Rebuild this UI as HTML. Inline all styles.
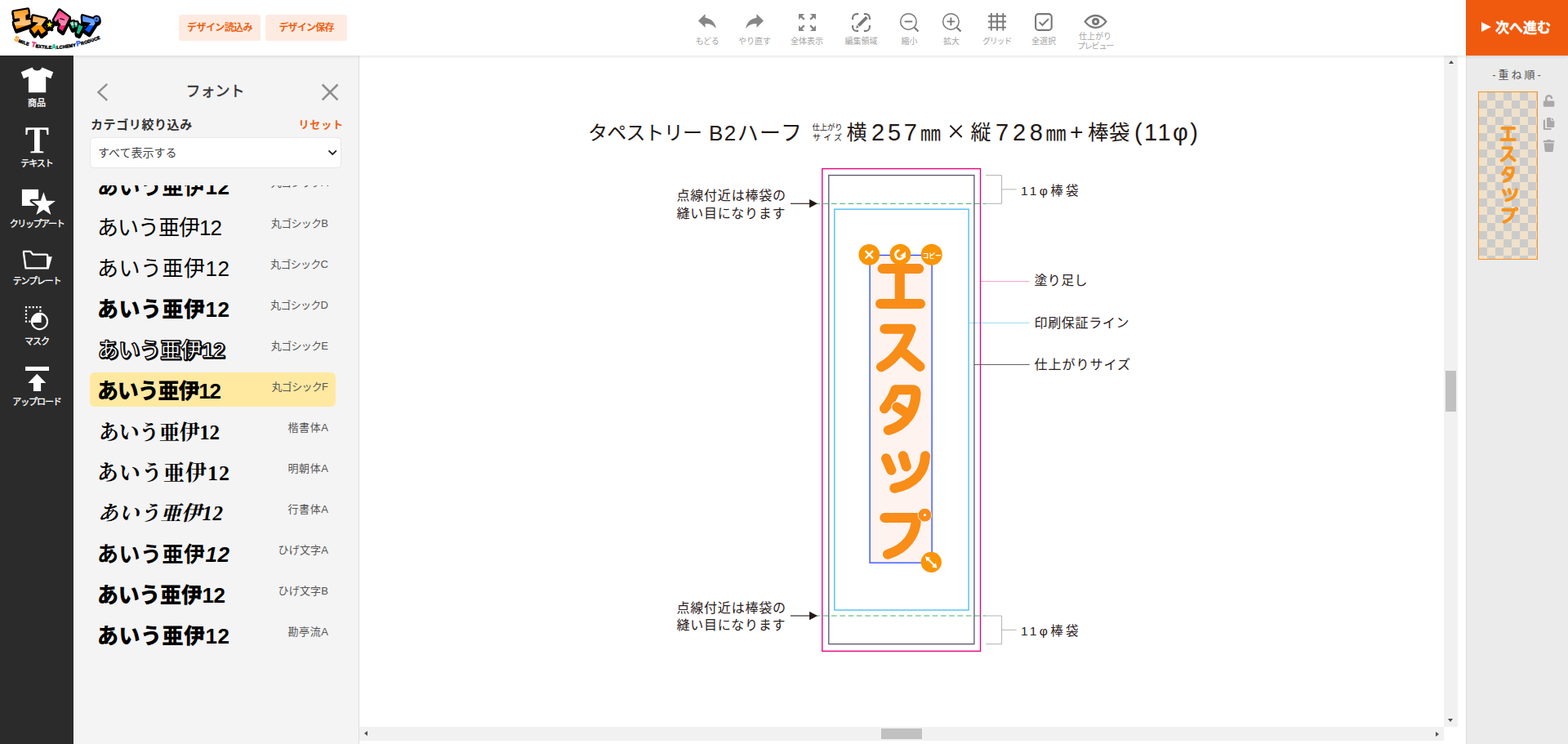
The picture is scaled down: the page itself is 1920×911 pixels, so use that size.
<!DOCTYPE html>
<html lang="ja">
<head>
<meta charset="utf-8">
<title>オリジナルデザイン作成 - フォント選択</title>
<style>
*{box-sizing:border-box;margin:0;padding:0}
html,body{width:1920px;height:911px;overflow:hidden;background:#fff}
body{position:relative;font-family:"Liberation Sans","Noto Sans CJK JP",sans-serif;color:#333;font-size:12px;line-height:1}
svg{display:block;overflow:visible}
.a{position:absolute}
/* header */
#header{position:absolute;left:0;top:0;width:1920px;height:68px;background:#fff;box-shadow:0 1px 4px rgba(0,0,0,.12);z-index:5}
#logo{position:absolute;left:0;top:0}
.hbtn{position:absolute;top:18px;width:100px;height:32px;border-radius:3px;background:#fdebe2;color:#f0600f;font-weight:bold;font-size:12px;line-height:32px;text-align:center;white-space:nowrap}
.tool{position:absolute;top:0;width:70px;height:68px;text-align:center}
.tool svg{position:absolute;left:0;top:0}
.tool span{position:absolute;left:-15px;right:-15px;top:45px;font-size:10px;line-height:11px;color:#a4a4a4;white-space:nowrap}
.tool span.two{top:39px;line-height:12px}
#next{position:absolute;left:1795px;top:0;width:125px;height:68px;background:#f05a0f;color:#fff;font-weight:bold;font-size:17px;z-index:6;-webkit-text-stroke:.4px #fff}
#next span{position:absolute;left:36px;top:25px;line-height:19px;white-space:nowrap}
#next i{position:absolute;left:19px;top:27px;width:0;height:0;border-left:12px solid #fff;border-top:6.5px solid transparent;border-bottom:6.5px solid transparent}
/* sidebar */
#side{position:absolute;left:0;top:68px;width:90px;height:843px;background:#2b2b2b}
.sitem{position:absolute;left:0;width:90px;text-align:center;color:#fff;font-size:11px;line-height:12px;white-space:nowrap;-webkit-text-stroke:.3px #fff}
/* font panel */
#panel{position:absolute;left:91px;top:68px;width:349px;height:843px;background:#f4f4f4;border-right:1px solid #dedede}
#ptitle{position:absolute;left:0;top:33px;width:345px;text-align:center;font-size:18px;line-height:22px;color:#333;-webkit-text-stroke:.45px #333}
#pcat{position:absolute;left:20px;top:76px;font-size:15px;line-height:18px;font-weight:bold;color:#333;white-space:nowrap;letter-spacing:.6px}
#preset{position:absolute;right:18px;top:77px;font-size:13px;line-height:15px;font-weight:bold;color:#f0600f;white-space:nowrap;letter-spacing:.9px}
#psel{position:absolute;left:19px;top:100px;width:308px;height:38px;background:#fff;border:1px solid #e6e6e6;border-radius:5px;font-size:14px;line-height:36px;color:#444;padding-left:9px;white-space:nowrap}
#plist{position:absolute;left:0;top:159px;width:348px;height:684px;overflow:hidden}
.frow{position:absolute;left:19px;width:301px;height:42px;border-radius:6px}
.frow.sel{background:#ffe9a1}
.frow svg{position:absolute;left:0;top:0}
.frow span{position:absolute;right:9px;top:10px;font-size:13px;line-height:15px;color:#555;white-space:nowrap}
/* canvas */
#canvas{position:absolute;left:440px;top:68px;width:1328px;height:822px;background:#fff;overflow:hidden}
#vsb{position:absolute;left:1768px;top:68px;width:17px;height:822px;background:#f1f1f1}
#hsb{position:absolute;left:440px;top:890px;width:1328px;height:17px;background:#f1f1f1}
.thumb{position:absolute;background:#c1c1c1}
.arr{position:absolute;width:0;height:0}
/* right panel */
#right{position:absolute;left:1795px;top:68px;width:125px;height:843px;background:#ebebeb;border-left:1px solid #dcdcdc}
#rlabel{position:absolute;left:0;top:16px;width:124px;text-align:center;font-size:13px;line-height:15px;letter-spacing:3px;text-indent:1px;color:#555;white-space:nowrap}
#rthumb{position:absolute;left:14px;top:44px;width:73px;height:206px;border:1px solid #f7931e;overflow:hidden}
</style>
</head>
<body>

<div id="header">
<svg id="logo" role="img" aria-label="エス・タップ SMILE TEXTILE ALCHEMY PRODUCE" width="140" height="68" viewBox="0 0 140 68">
<defs>
<linearGradient id="go" gradientUnits="userSpaceOnUse" x1="0" y1="11" x2="0" y2="46"><stop offset="0" stop-color="#ff9a14"/><stop offset=".56" stop-color="#ffc98c"/><stop offset=".575" stop-color="#ff9400"/><stop offset="1" stop-color="#ff9400"/></linearGradient>
<linearGradient id="gp" gradientUnits="userSpaceOnUse" x1="0" y1="11" x2="0" y2="46"><stop offset="0" stop-color="#ff2f80"/><stop offset=".56" stop-color="#ff90ba"/><stop offset=".575" stop-color="#ff2176"/><stop offset="1" stop-color="#ff2176"/></linearGradient>
<linearGradient id="gg" gradientUnits="userSpaceOnUse" x1="0" y1="11" x2="0" y2="46"><stop offset="0" stop-color="#45cda0"/><stop offset=".56" stop-color="#a4ead4"/><stop offset=".575" stop-color="#1bb88a"/><stop offset="1" stop-color="#1bb88a"/></linearGradient>
<linearGradient id="gb" gradientUnits="userSpaceOnUse" x1="0" y1="11" x2="0" y2="46"><stop offset="0" stop-color="#2670ff"/><stop offset=".56" stop-color="#7db0ff"/><stop offset=".575" stop-color="#0558ff"/><stop offset="1" stop-color="#0558ff"/></linearGradient>
<path id="arc" d="M16.5 48.8Q62.5 71.650 122.5 47.5" fill="none"/>
</defs>
<g id="lgo" fill="#000" stroke="#000" stroke-width="4.5" stroke-linejoin="round">
<polygon points="16.55,14.35 34.09,11.55 34.84,16.96 31.29,18.82 31.48,24.42 37.26,23.98 37.93,29.46 20.09,35.55 17.03,27.22 24.20,25.84 23.83,22.37 18.04,22.93"/>
<polygon points="40.52,19.53 56.52,23.28 50.59,31.19 56.13,37.71 50.59,41.85 47.04,35.53 42.30,41.26 37.95,35.33 47.04,27.63 39.93,26.64"/>
<polygon points="72.80,12.52 84.88,21.46 76.67,37.88 72.08,34.50 74.49,29.67 71.84,27.26 71.35,22.67 68.21,26.77 66.04,24.36"/>
<polygon points="85.75,27.85 89.92,26.18 90.97,34.10 88.67,34.73"/>
<polygon points="90.97,27.22 94.51,27.22 94.72,32.85 92.22,33.48"/>
<polygon points="96.39,30.35 101.60,32.43 96.80,41.82 93.68,40.57"/>
<polygon points="100.97,19.30 114.94,23.47 116.61,28.47 109.11,40.02 103.89,36.60 111.19,28.06 101.39,26.60"/>
<circle cx="118.28" cy="23.68" r="2.1" stroke-width="6.2"/>
<polygon points="60.7,26.1 61.7,28.7 64.5,28.9 62.3,30.6 63.0,33.3 60.7,31.9 58.3,33.3 59.0,30.6 56.9,28.9 59.6,28.7" stroke-width="4.2"/>
</g>
<use href="#lgo" y="1.5"/><use href="#lgo" x=".3" y="3"/>
<polygon points="16.55,14.35 34.09,11.55 34.84,16.96 31.29,18.82 31.48,24.42 37.26,23.98 37.93,29.46 20.09,35.55 17.03,27.22 24.20,25.84 23.83,22.37 18.04,22.93" fill="url(#go)"/>
<polygon points="40.52,19.53 56.52,23.28 50.59,31.19 56.13,37.71 50.59,41.85 47.04,35.53 42.30,41.26 37.95,35.33 47.04,27.63 39.93,26.64" fill="url(#go)"/>
<polygon points="72.80,12.52 84.88,21.46 76.67,37.88 72.08,34.50 74.49,29.67 71.84,27.26 71.35,22.67 68.21,26.77 66.04,24.36" fill="url(#gp)"/>
<polygon points="85.75,27.85 89.92,26.18 90.97,34.10 88.67,34.73" fill="url(#gg)"/>
<polygon points="90.97,27.22 94.51,27.22 94.72,32.85 92.22,33.48" fill="url(#gg)"/>
<polygon points="96.39,30.35 101.60,32.43 96.80,41.82 93.68,40.57" fill="url(#gg)"/>
<polygon points="100.97,19.30 114.94,23.47 116.61,28.47 109.11,40.02 103.89,36.60 111.19,28.06 101.39,26.60" fill="url(#gb)"/>
<path d="M73.29 22.67L79.08 24.26" stroke="#000" stroke-width="1.2"/>
<circle cx="118.28" cy="23.68" r="2.05" fill="none" stroke="#3d86ff" stroke-width="2.1"/>
<polygon points="60.7,26.1 61.7,28.7 64.5,28.9 62.3,30.6 63.0,33.3 60.7,31.9 58.3,33.3 59.0,30.6 56.9,28.9 59.6,28.7" fill="#ffff00"/>
<g font-family="Liberation Sans,sans-serif" font-weight="bold" font-size="5.400" fill="#0a0a0a" stroke="#0a0a0a" stroke-width=".5" letter-spacing=".22" text-rendering="geometricPrecision">
<text><textPath href="#arc" startOffset="0.5"><tspan font-size="8.400" fill="#ff9a1a" stroke="#ff9a1a">S</tspan>MILE</textPath></text>
<text><textPath href="#arc" startOffset="23.1"><tspan font-size="8.400" fill="#ff2d7d" stroke="#ff2d7d">T</tspan>EXTILE</textPath></text>
<text><textPath href="#arc" startOffset="48.2"><tspan font-size="8.400" fill="#1fb98c" stroke="#1fb98c">A</tspan>LCHEMY</textPath></text>
<text><textPath href="#arc" startOffset="79.5"><tspan font-size="8.400" fill="#1f62ff" stroke="#1f62ff">P</tspan>RODUCE</textPath></text>
</g>
</svg>
<div class="hbtn" style="left:219px;letter-spacing:-.6px">デザイン読込み</div>
<div class="hbtn" style="left:325px;letter-spacing:-.8px">デザイン保存</div>
<svg class="a" style="left:0;top:0" width="1920" height="68" viewBox="0 0 1920 68" fill="none">
<path d="M10 9V5l-7 7 7 7v-4.1c5 0 8.5 1.6 11 5.1-1-5-4-10-11-11z" fill="#868686" transform="translate(851.33 11.06) scale(1.2222 1.2)"/>
<path d="M10 9V5l-7 7 7 7v-4.1c5 0 8.5 1.6 11 5.1-1-5-4-10-11-11z" fill="#868686" transform="translate(938.67 11.06) scale(-1.2222 1.2)"/>
<path d="M15 3l2.3 2.3-2.89 2.87 1.42 1.42L18.7 6.7 21 9V3zM3 9l2.3-2.3 2.87 2.89 1.42-1.42L6.7 5.3 9 3H3zm6 12l-2.3-2.3 2.89-2.87-1.42-1.42L5.3 17.3 3 15v6zm12-6l-2.3 2.3-2.87-2.89-1.42 1.42 2.89 2.87L15 21h6z" fill="#868686" transform="translate(974.5 13.56) scale(1.1667)"/>
<path d="M1044.1 24.1V22.1a5 5 0 0 1 5 -5H1051.1M1057.9 17.1H1059.9a5 5 0 0 1 5 5V24.1M1064.9 30.9V32.9a5 5 0 0 1 -5 5H1057.9M1051.1 37.9H1049.1a5 5 0 0 1 -5 -5V30.9" stroke="#787878" stroke-width="2.1"/>
<g transform="translate(1048 34.6) rotate(-45)" fill="#787878"><path d="M0 0L3.6-1.9V1.9z"/><path d="M4.6-1.9H19V1.9H4.6z"/></g>
<circle cx="1112.4" cy="26.4" r="9.75" stroke="#787878" stroke-width="1.5"/>
<path d="M1119.7 33.7l4.8 4.8" stroke="#787878" stroke-width="2.3"/>
<path d="M1107.6 26.4h9.6" stroke="#787878" stroke-width="1.9"/>
<circle cx="1164.4" cy="26.4" r="9.75" stroke="#787878" stroke-width="1.5"/>
<path d="M1171.7 33.7l4.8 4.8" stroke="#787878" stroke-width="2.3"/>
<path d="M1159.6 26.4h9.6M1164.4 21.6v9.6" stroke="#787878" stroke-width="1.9"/>
<path d="M1213.8 16v21.4M1221 16v21.4M1228.3 16v21.4M1210 19.7h22M1210 26.5h22M1210 33.6h22" stroke="#787878" stroke-width="1.9"/>
<rect x="1268.1" y="17.1" width="19.6" height="19.8" rx="3.6" stroke="#787878" stroke-width="2.1"/>
<path d="M1272.7 27.1l3.7 3.7 7.6-7.7" stroke="#787878" stroke-width="2"/>
<path d="M1328.6 26.4C1333 20.6 1337.2 19 1341.5 19s8.5 1.6 12.9 7.4c-4.400 5.900-8.600 7.500-12.900 7.500s-8.500-1.600-12.900-7.500z" stroke="#787878" stroke-width="2.3" stroke-linejoin="miter"/>
<circle cx="1341.6" cy="26.4" r="3.15" stroke="#787878" stroke-width="3.1"/>
</svg>
<div class="tool" style="left:831px"><span style="letter-spacing:-0.4px">もどる</span></div>
<div class="tool" style="left:889px"><span>やり直す</span></div>
<div class="tool" style="left:953px"><span>全体表示</span></div>
<div class="tool" style="left:1019.5px"><span>編集領域</span></div>
<div class="tool" style="left:1078.5px"><span>縮小</span></div>
<div class="tool" style="left:1130px"><span>拡大</span></div>
<div class="tool" style="left:1185.5px"><span style="letter-spacing:-1.3px">グリッド</span></div>
<div class="tool" style="left:1243px"><span>全選択</span></div>
<div class="tool" style="left:1306px"><span class="two">仕上がり<br><b style="font-weight:normal;letter-spacing:-1.2px">プレビュー</b></span></div>
</div>
<div id="next"><i></i><span>次へ進む</span></div>
<div id="side">
<svg class="a" style="left:0;top:0" width="90" height="843" viewBox="0 68 90 843" fill="#fff">
<path d="M39.5 82.6C41 85.6 43 86.6 45.5 86.6S50 85.600 51.5 82.600L65.200 88.200 62.200 96.200 56.200 93.800V113.200H34.900V93.800L28.900 96.200 25.800 88.200z"/>
<path d="M37.4 187.2V185.5L42 184.9V158.7H40.9Q35.9 158.7 33.9 159.2L33.4 164.9H31.4V156.3H59.4V164.9H57.4L56.8 159.2Q55.1 158.8 49.8 158.8H48.7V184.9L53.3 185.5V187.2Z" fill="#fff"/>
<rect x="26.9" y="231.9" width="20.2" height="20.1"/>
<polygon points="53.4,235.3 57.0,245.7 68.0,245.9 59.2,252.5 62.4,263.0 53.4,256.7 44.4,263.0 47.6,252.5 38.8,245.9 49.8,245.7" fill="#2b2b2b" stroke="#2b2b2b" stroke-width="4.4" stroke-linejoin="round"/>
<polygon points="53.4,235.3 57.0,245.7 68.0,245.9 59.2,252.5 62.4,263.0 53.4,256.7 44.4,263.0 47.6,252.5 38.8,245.9 49.8,245.7"/>
<path d="M29 307.800H37.200L40.200 311.600H56.700Q58.200 311.600 58.200 313.100V328.400H31.500L28.900 309.500Q28.700 307.800 30.300 307.800z" fill="none" stroke="#fff" stroke-width="2.3" stroke-linejoin="round"/>
<path d="M58.200 314.300H63.800L59.600 329.500H58.200z"/>
<path d="M30.9 375.1h2.2v2.2h-2.2zM35.25 375.1h2.2v2.2h-2.2zM39.6 375.1h2.2v2.2h-2.2zM43.95 375.1h2.2v2.2h-2.2zM48.3 375.1h2.2v2.2h-2.2zM30.9 379.45h2.2v2.2h-2.2zM30.9 383.8h2.2v2.2h-2.2zM30.9 388.15h2.2v2.2h-2.2zM30.9 392.5h2.2v2.2h-2.2zM48.3 379.45h2.2v2.2h-2.2zM35.25 392.5h2.2v2.2h-2.2z"/>
<circle cx="48.45" cy="393.5" r="9.6" fill="none" stroke="#fff" stroke-width="2.1"/>
<clipPath id="mq"><rect x="31" y="375" width="19.6" height="19.900"/></clipPath>
<circle cx="48.45" cy="393.5" r="9.6" clip-path="url(#mq)"/>
<rect x="31" y="448.9" width="29" height="5.1"/>
<path d="M45.300 457.800L56.300 469H50.100V479H40.900V469H34.300z"/>
</svg>
<div class="sitem" style="top:52px;letter-spacing:0px">商品</div>
<div class="sitem" style="top:126px;letter-spacing:-1px">テキスト</div>
<div class="sitem" style="top:200px;letter-spacing:-1.4px">クリップアート</div>
<div class="sitem" style="top:270px;letter-spacing:-1.2px">テンプレート</div>
<div class="sitem" style="top:344px;letter-spacing:-1px">マスク</div>
<div class="sitem" style="top:418px;letter-spacing:-1.1px">アップロード</div>
</div>
<div id="panel">
<svg class="a" style="left:0;top:0" width="349" height="160" viewBox="91 68 349 160" fill="none">
<path d="M131.200 102.900L120.400 112.900 131.200 122.900" stroke="#8e8e8e" stroke-width="2.400"/>
<path d="M394.700 103.500L413.500 122.300M413.500 103.500L394.700 122.300" stroke="#8e8e8e" stroke-width="2.600"/>
</svg>
<div id="ptitle">フォント</div>
<div id="pcat">カテゴリ絞り込み</div>
<div id="preset">リセット</div>
<div id="psel">すべて表示する</div>
<svg class="a" style="left:309px;top:114px" width="14" height="10" viewBox="400 182 14 10" fill="none"><path d="M402.500 184.400L407.200 189 411.900 184.400" stroke="#222" stroke-width="1.800"/></svg>
<div id="plist">
<div class="frow" style="top:-21px">
<svg role="img" aria-label="あいう亜伊12" width="301" height="42" viewBox="110 206 301 42">
<text x="119" y="238" font-size="26" font-weight="700" textLength="162" fill="#000" font-family="'Liberation Sans','Noto Sans CJK JP',sans-serif">あいう亜伊12</text>
</svg><span style="letter-spacing:-0.7px;margin-right:0.7px">丸ゴシックA</span></div>
<div class="frow" style="top:29px">
<svg role="img" aria-label="あいう亜伊12" width="301" height="42" viewBox="110 256 301 42">
<text x="119" y="288" font-size="26" font-weight="400" textLength="153" fill="#000" font-family="'Liberation Sans','Noto Sans CJK JP',sans-serif">あいう亜伊12</text>
</svg><span style="letter-spacing:-0.7px;margin-right:0.7px">丸ゴシックB</span></div>
<div class="frow" style="top:79px">
<svg role="img" aria-label="あいう亜伊12" width="301" height="42" viewBox="110 306 301 42">
<text x="119" y="338" font-size="26" font-weight="400" textLength="162" fill="#000" font-family="'Liberation Sans','Noto Sans CJK JP',sans-serif">あいう亜伊12</text>
</svg><span style="letter-spacing:-0.7px;margin-right:0.7px">丸ゴシックC</span></div>
<div class="frow" style="top:129px">
<svg role="img" aria-label="あいう亜伊12" width="301" height="42" viewBox="110 356 301 42">
<text x="119" y="388" font-size="26" font-weight="900" textLength="162" fill="#000" font-family="'Liberation Sans','Noto Sans CJK JP',sans-serif">あいう亜伊12</text>
</svg><span style="letter-spacing:-0.7px;margin-right:0.7px">丸ゴシックD</span></div>
<div class="frow" style="top:179px">
<svg role="img" aria-label="あいう亜伊12" width="301" height="42" viewBox="110 406 301 42">
<text x="119.500" y="437.500" font-size="26" font-weight="700" textLength="156" fill="#000" stroke="#000" stroke-width="1.5" stroke-linejoin="round" transform="translate(1 1.5)" font-family="'Liberation Sans','Noto Sans CJK JP',sans-serif">あいう亜伊12</text>
<text x="119.500" y="437.500" font-size="26" font-weight="700" textLength="156" fill="#fff" stroke="#000" stroke-width="1.3" stroke-linejoin="round" font-family="'Liberation Sans','Noto Sans CJK JP',sans-serif">あいう亜伊12</text>
</svg><span style="letter-spacing:-0.7px;margin-right:0.7px">丸ゴシックE</span></div>
<div class="frow sel" style="top:229px">
<svg role="img" aria-label="あいう亜伊12" width="301" height="42" viewBox="110 456 301 42">
<text x="119" y="488" font-size="26" font-weight="900" textLength="152" fill="#000" font-family="'Liberation Sans','Noto Sans CJK JP',sans-serif">あいう亜伊12</text>
</svg><span style="letter-spacing:-0.7px;margin-right:0.7px">丸ゴシックF</span></div>
<div class="frow" style="top:279px">
<svg role="img" aria-label="あいう亜伊12" width="301" height="42" viewBox="110 506 301 42">
<text x="121" y="538" font-size="25" font-weight="700" textLength="148" fill="#000" font-family="'Liberation Serif','Noto Serif CJK SC',serif">あいう亜伊12</text>
</svg><span style="letter-spacing:0.6px;margin-right:-0.6px">楷書体A</span></div>
<div class="frow" style="top:329px">
<svg role="img" aria-label="あいう亜伊12" width="301" height="42" viewBox="110 556 301 42">
<text x="119" y="588" font-size="26" font-weight="700" textLength="162" fill="#000" font-family="'Liberation Serif','Noto Serif CJK SC',serif">あいう亜伊12</text>
</svg><span style="letter-spacing:0.6px;margin-right:-0.6px">明朝体A</span></div>
<div class="frow" style="top:379px">
<svg role="img" aria-label="あいう亜伊12" width="301" height="42" viewBox="110 606 301 42">
<text x="120" y="637" font-size="25" font-weight="700" font-style="italic" textLength="153" fill="#000" font-family="'Liberation Serif','Noto Serif CJK SC',serif">あいう亜伊12</text>
</svg><span style="letter-spacing:0.6px;margin-right:-0.6px">行書体A</span></div>
<div class="frow" style="top:429px">
<svg role="img" aria-label="あいう亜伊12" width="301" height="42" viewBox="110 656 301 42">
<text x="119" y="688" font-size="26" font-weight="700" textLength="162" fill="#000" font-family="'Liberation Sans','Noto Sans CJK JP',sans-serif">あいう亜伊<tspan font-style="italic">12</tspan></text>
</svg><span style="letter-spacing:0.2px;margin-right:-0.2px">ひげ文字A</span></div>
<div class="frow" style="top:479px">
<svg role="img" aria-label="あいう亜伊12" width="301" height="42" viewBox="110 706 301 42">
<text x="119" y="738" font-size="26" font-weight="900" textLength="157" fill="#000" font-family="'Liberation Sans','Noto Sans CJK JP',sans-serif">あいう亜伊12</text>
</svg><span style="letter-spacing:0.2px;margin-right:-0.2px">ひげ文字B</span></div>
<div class="frow" style="top:529px">
<svg role="img" aria-label="あいう亜伊12" width="301" height="42" viewBox="110 756 301 42">
<text x="119" y="788" font-size="26" font-weight="900" textLength="162" fill="#000" font-family="'Liberation Sans','Noto Sans CJK JP',sans-serif">あいう亜伊12</text>
</svg><span style="letter-spacing:0.6px;margin-right:-0.6px">勘亭流A</span></div>
</div>
</div>
<div id="canvas">
<svg class="a" role="img" aria-label="タペストリー B2ハーフ 仕上がりサイズ 横257㎜×縦728㎜+棒袋(11φ) / 点線付近は棒袋の縫い目になります / 11φ棒袋 / 塗り足し / 印刷保証ライン / 仕上がりサイズ / エスタップ" style="left:0;top:0" width="1328" height="822" viewBox="440 68 1328 822" fill="none">
<g fill="#231815" font-family="'Liberation Sans','Noto Sans CJK JP',sans-serif">
<text x="720" y="171" font-size="24" textLength="140">タペストリー</text>
<text x="868" y="171.500" font-size="26" textLength="114">B2ハーフ</text>
<text x="994.600" y="158.700" font-size="9.300" textLength="37">仕上がり</text>
<text x="995" y="171.500" font-size="10" textLength="36">サイズ</text>
<text x="1036.500" y="171" font-size="25">横</text>
<text x="1067" y="171.600" font-size="29" textLength="56">257</text>
<text x="1127" y="172" font-size="25">㎜</text>
<text x="1188.500" y="171" font-size="25">縦</text>
<text x="1219" y="171.600" font-size="29" textLength="58">728</text>
<text x="1280.500" y="172" font-size="25">㎜</text>
<text x="1310" y="171" font-size="28">+</text>
<text x="1332" y="171" font-size="25.500" textLength="51.500">棒袋</text>
<text x="1389" y="171.600" font-size="29" textLength="78">(11φ)</text>
</g>
<path d="M1163.4 153.700l14.300 14.300M1177.700 153.700l-14.300 14.300" stroke="#231815" stroke-width="1.9"/>
<g fill="#2b201d" font-size="16" font-family="'Liberation Sans','Noto Sans CJK JP',sans-serif">
<text x="828.500" y="245" textLength="133.500">点線付近は棒袋の</text>
<text x="828.500" y="266.800" textLength="133">縫い目になります</text>
<text x="828.500" y="749.600" textLength="133.500">点線付近は棒袋の</text>
<text x="828.500" y="771.400" textLength="133">縫い目になります</text>
<text x="1250" y="238.600" font-size="15.500" textLength="70.500">11φ棒袋</text>
<text x="1250" y="778" font-size="15.500" textLength="70.500">11φ棒袋</text>
<text x="1266.500" y="349" textLength="65">塗り足し</text>
<text x="1266.500" y="400.500" textLength="116">印刷保証ライン</text>
<text x="1266.500" y="451.500" textLength="117.500">仕上がりサイズ</text>
</g>
<path d="M997.400 249.400H1207.100M997.400 754H1207.100" stroke="#3fb466" stroke-width="1" stroke-dasharray="6.700 3.600"/>
<path d="M968 249.3H992" stroke="#231815" stroke-width="1.100"/>
<path d="M1001 249.3L991.100 244V254.6z" fill="#231815"/>
<path d="M968 754H992" stroke="#231815" stroke-width="1.100"/>
<path d="M1001 754L991.100 748.7V759.3z" fill="#231815"/>
<path d="M1200.500 344.500H1260.700" stroke="#f6a5cd" stroke-width="1"/>
<path d="M1186.100 395.400H1260.700" stroke="#9bdcf8" stroke-width="1"/>
<path d="M1192.900 446.400H1260.700" stroke="#595757" stroke-width="1"/>
<path d="M1207.100 214.600H1226.600V249.300H1207.100M1226.600 231.900H1244.700" stroke="#b5b1b0" stroke-width="1"/>
<path d="M1207.100 754H1226.600V788.600H1207.100M1226.600 771.300H1244.700" stroke="#b5b1b0" stroke-width="1"/>
<rect x="1021.800" y="256.200" width="164.300" height="490.800" stroke="#5bc5f2" stroke-width="1.500"/>
<rect x="1014.800" y="214.600" width="178.100" height="574" stroke="#55566d" stroke-width="1.300"/>
<rect x="1006.800" y="206.600" width="193.700" height="590.700" stroke="#e4007f" stroke-width="1.350"/>
<rect x="1065.100" y="312.500" width="76" height="376.600" fill="#fff3ef" stroke="#2347ff" stroke-width="1.300"/>
<path d="M1080.600 329H1125.200M1101.800 329V372M1078 372H1127M1083.300 402.700H1115.500C1111.500 415 1099 439 1079 449.300M1107.600 432.600L1126.400 448.900M1096.400 477.300C1093.500 485.500 1089 493.500 1083 500.200M1096.400 477.300H1117.500Q1121.800 477.300 1121.600 481.600C1120.500 503.500 1109.500 521 1087.800 526.800M1085.100 561.400L1091.300 575.700M1105.800 558.300L1109.800 571.200M1133 558.300C1132 578 1120 593.200 1095.300 597.700M1083.300 634H1122C1122 655 1108.500 672.500 1087.100 678.700" fill="none" stroke="#f88d18" stroke-width="12.100" stroke-linecap="round" stroke-linejoin="round"/><circle cx="1098.300" cy="498.400" r="7.100" fill="#fff3ef"/><path d="M1098.300 498.400L1111.800 507" fill="none" stroke="#f88d18" stroke-width="12" stroke-linecap="round"/><circle cx="1132.400" cy="630.600" r="8.700" fill="#fff3ef"/><circle cx="1132.400" cy="630.600" r="4.800" fill="none" stroke="#f88d18" stroke-width="6.300"/>
<circle cx="1064.3" cy="311.8" r="12.9" fill="#f99506"/>
<circle cx="1102.4" cy="311.7" r="12.9" fill="#f99506"/>
<circle cx="1140.8" cy="311.7" r="13" fill="#f99506"/>
<circle cx="1140.3" cy="688.4" r="12.6" fill="#f99506"/>
<path d="M1059.600 307.100l9.400 9.400M1069 307.100l-9.400 9.400" stroke="#fff" stroke-width="2.400"/>
<path d="M1100.49 306.560A5.400 5.400 0 1 0 1106 315.200" stroke="#fff" stroke-width="2.800" stroke-linecap="round"/>
<path d="M1108.800 307.900V316.100L1102 313.200z" fill="#fff"/>
<text x="1129.800" y="315.800" font-size="7.600" font-weight="bold" textLength="23" fill="#fff" font-family="'Liberation Sans','Noto Sans CJK JP',sans-serif">コピー</text>
<g transform="translate(1140.170 688.440) rotate(45)" fill="#fff"><path d="M-10.300 0L-4.700-3.400V-1.100H4.700V-3.400L10.300 0 4.700 3.400V1.100H-4.700V3.400z"/></g>
</svg>
</div>
<div id="vsb"><div class="thumb" style="left:2px;top:386px;width:13px;height:50px"></div><div class="arr" style="left:6px;top:6px;border-left:3px solid transparent;border-right:3px solid transparent;border-bottom:4px solid #505050"></div><div class="arr" style="left:5px;top:812px;border-left:3px solid transparent;border-right:3px solid transparent;border-top:4px solid #505050"></div></div>
<div id="hsb"><div class="thumb" style="left:639px;top:2px;width:50px;height:13px"></div><div class="arr" style="left:6px;top:5px;border-top:3px solid transparent;border-bottom:3px solid transparent;border-right:4px solid #505050"></div><div class="arr" style="left:1318px;top:6px;border-top:3px solid transparent;border-bottom:3px solid transparent;border-left:4px solid #505050"></div></div>
<div id="right">
<div id="rlabel">-重ね順-</div>
<div id="rthumb"><svg role="img" aria-label="エスタップ" width="72" height="205" viewBox="1811 113 72 205">
<defs><pattern id="chk" x="1811" y="113" width="20" height="20" patternUnits="userSpaceOnUse"><rect width="20" height="20" fill="#cbcbcb"/><rect width="10" height="10" fill="#f0e1ca"/><rect x="10" y="10" width="10" height="10" fill="#f0e1ca"/></pattern></defs>
<rect x="1811" y="113" width="72" height="205" fill="url(#chk)"/>
<g transform="translate(1484.64 48.89) scale(0.3284 0.3284)">
<path d="M1080.600 329H1125.200M1101.800 329V372M1078 372H1127M1083.300 402.700H1115.500C1111.500 415 1099 439 1079 449.300M1107.600 432.600L1126.400 448.900M1096.400 477.300C1093.500 485.500 1089 493.500 1083 500.200M1096.400 477.300H1117.500Q1121.800 477.300 1121.600 481.600C1120.500 503.500 1109.500 521 1087.800 526.800M1085.100 561.400L1091.300 575.700M1105.800 558.300L1109.800 571.200M1133 558.300C1132 578 1120 593.200 1095.300 597.700M1083.300 634H1122C1122 655 1108.500 672.500 1087.100 678.700" fill="none" stroke="#f7931e" stroke-width="12.100" stroke-linecap="round" stroke-linejoin="round"/><path d="M1098.300 498.400L1111.800 507" fill="none" stroke="#f7931e" stroke-width="12" stroke-linecap="round"/><circle cx="1132.400" cy="630.600" r="4.800" fill="none" stroke="#f7931e" stroke-width="6.300"/>
</g>
</svg></div>
<svg class="a" style="left:-1px;top:0" width="125" height="200" viewBox="1795 68 125 200" fill="#a9a9a9">
<rect x="1889.800" y="123.400" width="13.500" height="7.300" rx="1.300"/>
<path d="M1893.300 124V120.600a3.350 3.350 0 0 1 6.700 0V121" fill="none" stroke="#a9a9a9" stroke-width="2.500"/>
<path d="M1895 143.900h4.800l3.500 3.600v7.600a1 1 0 0 1 -1 1h-7.300a1 1 0 0 1 -1 -1v-10.200a1 1 0 0 1 1 -1z"/>
<path d="M1899.500 144v3.700h3.800" fill="none" stroke="#ebebeb" stroke-width=".900"/>
<path d="M1889.800 147.600a1 1 0 0 1 1 -1h1.300v10.300h7.500v1a1 1 0 0 1 -1 1h-7.800a1 1 0 0 1 -1 -1z"/>
<path d="M1889.800 172.100h3.900l.700-1.200h4.300l.700 1.200h3.900v2.200h-13.500zM1890.700 175.200h12l-.900 9.500a1.400 1.400 0 0 1 -1.400 1.300h-7.400a1.400 1.400 0 0 1 -1.400 -1.300z"/>
</svg>
</div>
</body>
</html>
